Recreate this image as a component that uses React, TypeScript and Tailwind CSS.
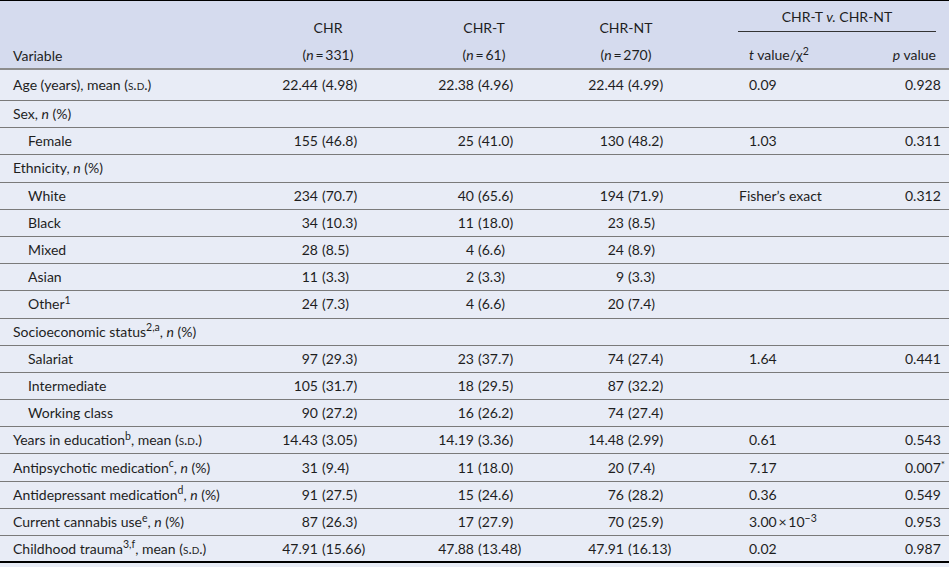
import React from "react";

const SD = () => <span className="[font-variant:small-caps]">(s.d.)</span>;
const N = () => <i>n</i>;

type Row = {
  label: React.ReactNode;
  indent?: boolean;
  vals?: [string, string][];
  t?: React.ReactNode;
  tCenter?: boolean;
  p?: React.ReactNode;
  first?: boolean;
};

const rows: Row[] = [
  { label: <>Age (years), mean <SD /></>, vals: [["22.44", "(4.98)"], ["22.38", "(4.96)"], ["22.44", "(4.99)"]], t: "0.09", p: "0.928", first: true },
  { label: <>Sex, <N /> (%)</> },
  { label: "Female", indent: true, vals: [["155", "(46.8)"], ["25", "(41.0)"], ["130", "(48.2)"]], t: "1.03", p: "0.311" },
  { label: <>Ethnicity, <N /> (%)</> },
  { label: "White", indent: true, vals: [["234", "(70.7)"], ["40", "(65.6)"], ["194", "(71.9)"]], t: "Fisher’s exact", tCenter: true, p: "0.312" },
  { label: "Black", indent: true, vals: [["34", "(10.3)"], ["11", "(18.0)"], ["23", "(8.5)"]] },
  { label: "Mixed", indent: true, vals: [["28", "(8.5)"], ["4", "(6.6)"], ["24", "(8.9)"]] },
  { label: "Asian", indent: true, vals: [["11", "(3.3)"], ["2", "(3.3)"], ["9", "(3.3)"]] },
  { label: <>Other<sup>1</sup></>, indent: true, vals: [["24", "(7.3)"], ["4", "(6.6)"], ["20", "(7.4)"]] },
  { label: <>Socioeconomic status<sup>2,a</sup>, <N /> (%)</> },
  { label: "Salariat", indent: true, vals: [["97", "(29.3)"], ["23", "(37.7)"], ["74", "(27.4)"]], t: "1.64", p: "0.441" },
  { label: "Intermediate", indent: true, vals: [["105", "(31.7)"], ["18", "(29.5)"], ["87", "(32.2)"]] },
  { label: "Working class", indent: true, vals: [["90", "(27.2)"], ["16", "(26.2)"], ["74", "(27.4)"]] },
  { label: <>Years in education<sup>b</sup>, mean <SD /></>, vals: [["14.43", "(3.05)"], ["14.19", "(3.36)"], ["14.48", "(2.99)"]], t: "0.61", p: "0.543" },
  { label: <>Antipsychotic medication<sup>c</sup>, <N /> (%)</>, vals: [["31", "(9.4)"], ["11", "(18.0)"], ["20", "(7.4)"]], t: "7.17", p: <>0.007<sup className="text-[10px]">*</sup></> },
  { label: <>Antidepressant medication<sup>d</sup>, <N /> (%)</>, vals: [["91", "(27.5)"], ["15", "(24.6)"], ["76", "(28.2)"]], t: "0.36", p: "0.549" },
  { label: <>Current cannabis use<sup>e</sup>, <N /> (%)</>, vals: [["87", "(26.3)"], ["17", "(27.9)"], ["70", "(25.9)"]], t: <>3.00{"\u2009×\u2009"}10<sup>−3</sup></>, p: "0.953" },
  { label: <>Childhood trauma<sup>3,f</sup>, mean <SD /></>, vals: [["47.91", "(15.66)"], ["47.88", "(13.48)"], ["47.91", "(16.13)"]], t: "0.02", p: "0.987" },
];

const cellW = ["w-[136px]", "w-[176px]", "w-[108px]"];
const leftW = ["w-[58px]", "w-[78px]", "w-[52px]"];

export default function App() {
  return (
    <div
      className="w-[949px] h-[567px] overflow-hidden bg-[#e8ecf6] text-[#1e1e1e] text-[14px] leading-[20px]"
      style={{ fontFamily: 'Lato, "Open Sans", sans-serif' }}
    >
      <div className="border-t border-black bg-[#d5dbee] h-[70px] border-b-2 border-b-[#8c8c8c] flex">
        <div className="w-[260px] pl-[13px] pt-[45px]">Variable</div>
        {[
          ["CHR", "331"],
          ["CHR-T", "61"],
          ["CHR-NT", "270"],
        ].map(([h, n], i) => (
          <div key={h} className={`${cellW[i]} flex flex-col items-center pt-[17px] gap-[7px]`}>
            <div>{h}</div>
            <div className="whitespace-nowrap">
              (<i>n</i>{"\u2009=\u2009"}{n})
            </div>
          </div>
        ))}
        <div className="flex-1 flex flex-col pt-[6px]">
          <div className="ml-[58px] w-[198px] text-center border-b border-[#333] pb-[4px]">
            CHR-T <i>v.</i> CHR-NT
          </div>
          <div className="flex mt-[13px]">
            <div className="w-[200px] pl-[69px] whitespace-nowrap">
              <i>t</i> value/χ<sup>2</sup>
            </div>
            <div className="w-[56px] text-right whitespace-nowrap">
              <i>p</i> value
            </div>
          </div>
        </div>
      </div>
      {rows.map((r, idx) => (
        <div
          key={idx}
          className={`flex items-center ${r.first ? "h-[31px]" : "h-[27.2px]"} ${
            idx === rows.length - 1 ? "border-b-2 border-black" : "border-b border-[#7a7a7a]"
          }`}
        >
          <div className={`w-[260px] whitespace-nowrap ${r.indent ? "pl-[28px]" : "pl-[13px]"}`}>{r.label}</div>
          {r.vals &&
            r.vals.map(([a, b], i) => (
              <div key={i} className={`${cellW[i]} flex whitespace-nowrap`}>
                <span className={`${leftW[i]} text-right`}>{a}</span>
                <span className="ml-[4px]">{b}</span>
              </div>
            ))}
          {r.vals && (
            <>
              <div className={`w-[200px] whitespace-nowrap ${r.tCenter ? "pl-[59px]" : "pl-[69px]"}`}>{r.t}</div>
              <div className="pl-[25px] whitespace-nowrap">{r.p}</div>
            </>
          )}
        </div>
      ))}
    </div>
  );
}
